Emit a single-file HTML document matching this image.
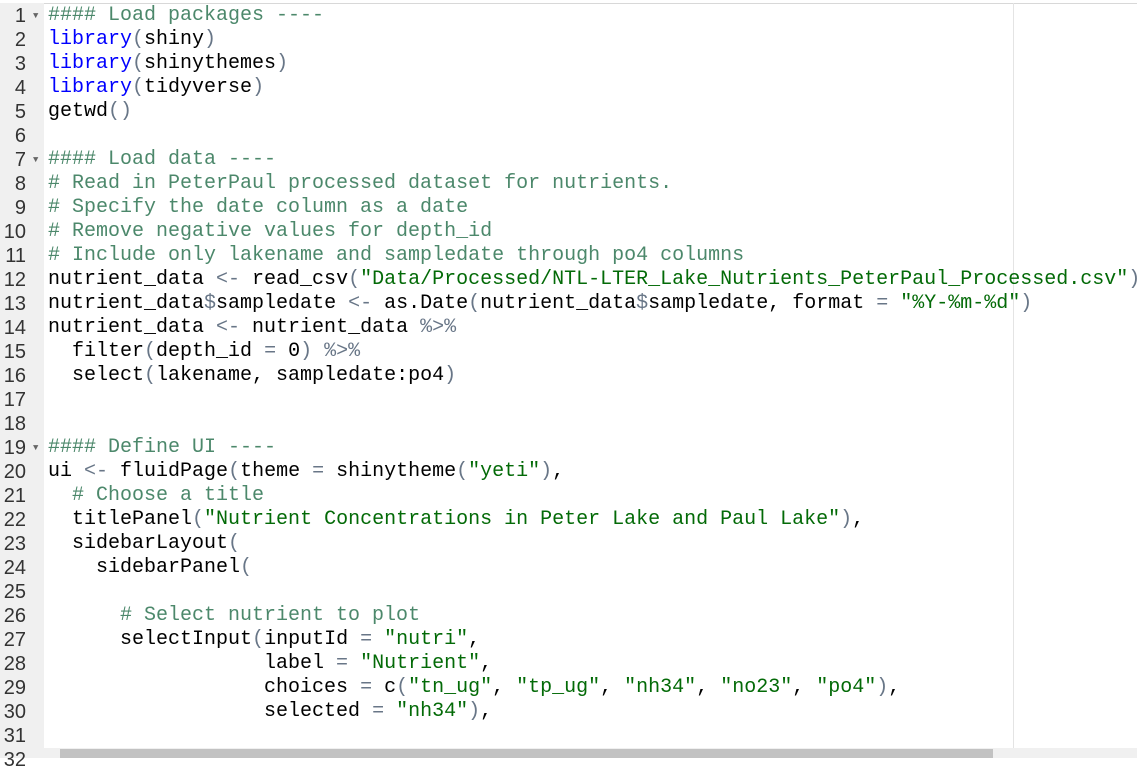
<!DOCTYPE html>
<html><head><meta charset="utf-8"><style>
body{margin:0;width:1137px;height:758px;overflow:hidden;background:#fff;position:relative;font-family:"Liberation Mono",monospace;}
#top{position:absolute;left:0;top:0;width:1137px;height:3px;background:#fff;border-bottom:1px solid #d8d8d8;}
#gut{position:absolute;left:0;top:3px;width:44px;height:755px;background:#f0f0f0;}
#margin{position:absolute;left:1013px;top:3px;width:1px;height:745px;background:#e4e4e4;}
.ln{position:absolute;left:0;width:26px;text-align:right;font-family:"Liberation Sans",sans-serif;font-size:20px;color:#333;line-height:24px;}
.fold{position:absolute;left:33px;font-size:9px;color:#666;line-height:24px;}
pre{position:absolute;left:48px;top:4px;margin:0;font-family:"Liberation Mono",monospace;font-size:20px;line-height:24px;color:#000;}
.c{color:#4c886b}.k{color:#0000ff}.s{color:#036a07}.p{color:#687687}
#hs{position:absolute;left:44px;top:748px;width:1093px;height:10px;background:#f0f0f0;}
#th{position:absolute;left:60px;top:749px;width:933px;height:9px;background:#c2c2c2;}
</style></head><body>
<div id="top"></div>
<div id="gut"></div>
<div id="margin"></div>
<div id="nums"></div>
<pre><span class="c">#### Load packages ----</span>
<span class="k">library</span><span class="p">(</span>shiny<span class="p">)</span>
<span class="k">library</span><span class="p">(</span>shinythemes<span class="p">)</span>
<span class="k">library</span><span class="p">(</span>tidyverse<span class="p">)</span>
getwd<span class="p">()</span>

<span class="c">#### Load data ----</span>
<span class="c"># Read in PeterPaul processed dataset for nutrients.</span>
<span class="c"># Specify the date column as a date</span>
<span class="c"># Remove negative values for depth_id</span>
<span class="c"># Include only lakename and sampledate through po4 columns</span>
nutrient_data <span class="p">&lt;-</span> read_csv<span class="p">(</span><span class="s">"Data/Processed/NTL-LTER_Lake_Nutrients_PeterPaul_Processed.csv"</span><span class="p">)</span>
nutrient_data<span class="p">$</span>sampledate <span class="p">&lt;-</span> as.Date<span class="p">(</span>nutrient_data<span class="p">$</span>sampledate, format <span class="p">=</span> <span class="s">"%Y-%m-%d"</span><span class="p">)</span>
nutrient_data <span class="p">&lt;-</span> nutrient_data <span class="p">%&gt;%</span>
  filter<span class="p">(</span>depth_id <span class="p">=</span> 0<span class="p">)</span> <span class="p">%&gt;%</span>
  select<span class="p">(</span>lakename, sampledate:po4<span class="p">)</span>


<span class="c">#### Define UI ----</span>
ui <span class="p">&lt;-</span> fluidPage<span class="p">(</span>theme <span class="p">=</span> shinytheme<span class="p">(</span><span class="s">"yeti"</span><span class="p">)</span>,
  <span class="c"># Choose a title</span>
  titlePanel<span class="p">(</span><span class="s">"Nutrient Concentrations in Peter Lake and Paul Lake"</span><span class="p">)</span>,
  sidebarLayout<span class="p">(</span>
    sidebarPanel<span class="p">(</span>

      <span class="c"># Select nutrient to plot</span>
      selectInput<span class="p">(</span>inputId <span class="p">=</span> <span class="s">"nutri"</span>,
                  label <span class="p">=</span> <span class="s">"Nutrient"</span>,
                  choices <span class="p">=</span> c<span class="p">(</span><span class="s">"tn_ug"</span>, <span class="s">"tp_ug"</span>, <span class="s">"nh34"</span>, <span class="s">"no23"</span>, <span class="s">"po4"</span><span class="p">)</span>,
                  selected <span class="p">=</span> <span class="s">"nh34"</span><span class="p">)</span>,

</pre>
<div id="hs"></div><div id="th"></div>
<script>
var h='';for(var i=1;i<=32;i++){h+='<div class="ln" style="top:'+(4+(i-1)*24)+'px">'+i+'</div>';}
[1,7,19].forEach(function(i){h+='<div class="fold" style="top:'+(4+(i-1)*24)+'px">&#9660;</div>';});
document.getElementById('nums').innerHTML=h;
</script>
</body></html>
